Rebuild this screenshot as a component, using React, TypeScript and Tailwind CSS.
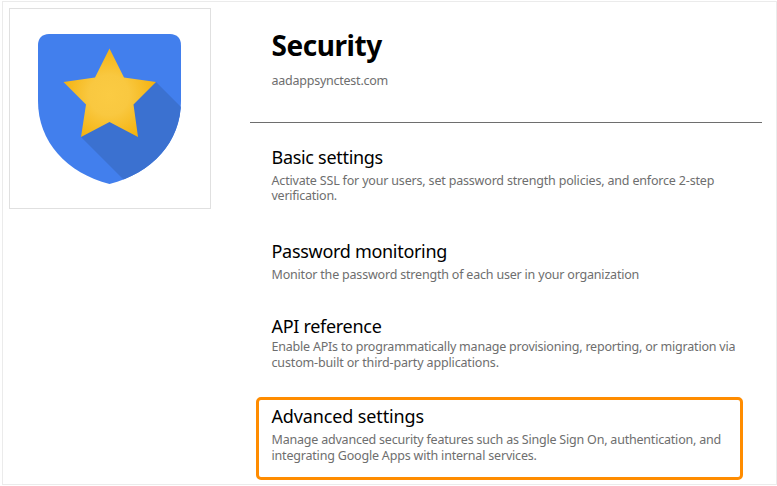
import React from "react";

type Line = { text: string; tracking: string };
type Item = { title: Line; lines: Line[]; titleGap: string; leading: string };

const items: Item[] = [
  {
    title: { text: "Basic settings", tracking: "tracking-[-0.3px]" },
    lines: [
      { text: "Activate SSL for your users, set password strength policies, and enforce 2-step", tracking: "tracking-[-0.18px]" },
      { text: "verification.", tracking: "tracking-[-0.25px]" },
    ],
    titleGap: "mt-[4px]",
    leading: "h-[15px] leading-[15px]",
  },
  {
    title: { text: "Password monitoring", tracking: "tracking-[-0.3px]" },
    lines: [{ text: "Monitor the password strength of each user in your organization", tracking: "tracking-[-0.195px]" }],
    titleGap: "mt-[4px]",
    leading: "h-[16px] leading-4",
  },
  {
    title: { text: "API reference", tracking: "tracking-[-0.3px]" },
    lines: [
      { text: "Enable APIs to programmatically manage provisioning, reporting, or migration via", tracking: "tracking-[-0.207px]" },
      { text: "custom-built or third-party applications.", tracking: "tracking-[-0.148px]" },
    ],
    titleGap: "mt-px",
    leading: "h-[16px] leading-4",
  },
  {
    title: { text: "Advanced settings", tracking: "tracking-[-0.13px]" },
    lines: [
      { text: "Manage advanced security features such as Single Sign On, authentication, and", tracking: "tracking-[-0.205px]" },
      { text: "integrating Google Apps with internal services.", tracking: "tracking-[-0.19px]" },
    ],
    titleGap: "mt-[4px]",
    leading: "h-[16px] leading-4",
  },
];

function Setting({ item }: { item: Item }) {
  return (
    <section className="whitespace-nowrap">
      <h2 className="h-6 text-[18px] leading-6 text-black">
        <span className={item.title.tracking}>{item.title.text}</span>
      </h2>
      <div className={item.titleGap}>
        {item.lines.map((l) => (
          <p key={l.text} className={`text-[12.5px] text-[#6e6e6e] ${item.leading}`}>
            <span className={l.tracking}>{l.text}</span>
          </p>
        ))}
      </div>
    </section>
  );
}

function Shield() {
  return (
    <svg viewBox="0 0 200 199" className="h-[199px] w-[200px]">
      <defs>
        <radialGradient id="gold" gradientUnits="userSpaceOnUse" cx="99" cy="86" r="50">
          <stop offset="0" stopColor="#fbcb43" />
          <stop offset="0.4" stopColor="#f9c840" />
          <stop offset="1" stopColor="#f4b10c" />
        </radialGradient>
        <clipPath id="shield">
          <path d="M39 25H160Q171 25.500 171 36.500V92C171 133 142 164 99.500 175C57 164 28 133 28 92V36.500Q28 25.500 39 25Z" />
        </clipPath>
      </defs>
      <g clipPath="url(#shield)">
        <rect width="200" height="199" fill="#427fed" />
        <path d="M146 73L196 123V199H142L71 128L99 80Z" fill="#3b71d0" />
      </g>
      <path d="M99.500 39.500L114 68.500L146 73L123.500 95.500L128 128L99.500 113L71 128L76 95.500L53.500 73L85 68.500Z" fill="url(#gold)" />
    </svg>
  );
}

export default function App() {
  return (
    <div className="h-[486px] w-[777px] overflow-hidden bg-white pl-[2px] pt-px font-['Noto_Sans',sans-serif]">
      <main className="flex h-[484px] w-[775px] border border-[#ebebeb] bg-white p-px">
        <aside className="ml-[5px] mt-[5px] h-[201px] w-[202px] shrink-0 border border-[#e0e0e0]">
          <Shield />
        </aside>
        <div className="ml-[39px] w-[512px] shrink-0">
          <header className="h-[120px] whitespace-nowrap border-b border-[#6e6e6e] pl-[21.5px] pt-6">
            <h1 className="h-9 text-[28px] font-bold leading-9 text-black">
              <span className="tracking-[-0.45px]">Security</span>
            </h1>
            <p className="mt-[10px] text-[12.5px] leading-4 text-[#6e6e6e]">
              <span className="tracking-[-0.24px]">aadappsynctest.com</span>
            </p>
          </header>
          <div className="pl-[21.5px] pt-[22px]">
            <Setting item={items[0]} />
            <div className="mt-[36px]"><Setting item={items[1]} /></div>
            <div className="mt-[31px]"><Setting item={items[2]} /></div>
          </div>
          <div className="ml-[6px] mt-[26px] h-[83px] w-[487px] rounded-[5px] border-[3px] border-[#ff8c00] pl-[12.5px] pt-[4px]">
            <Setting item={items[3]} />
          </div>
        </div>
      </main>
    </div>
  );
}
